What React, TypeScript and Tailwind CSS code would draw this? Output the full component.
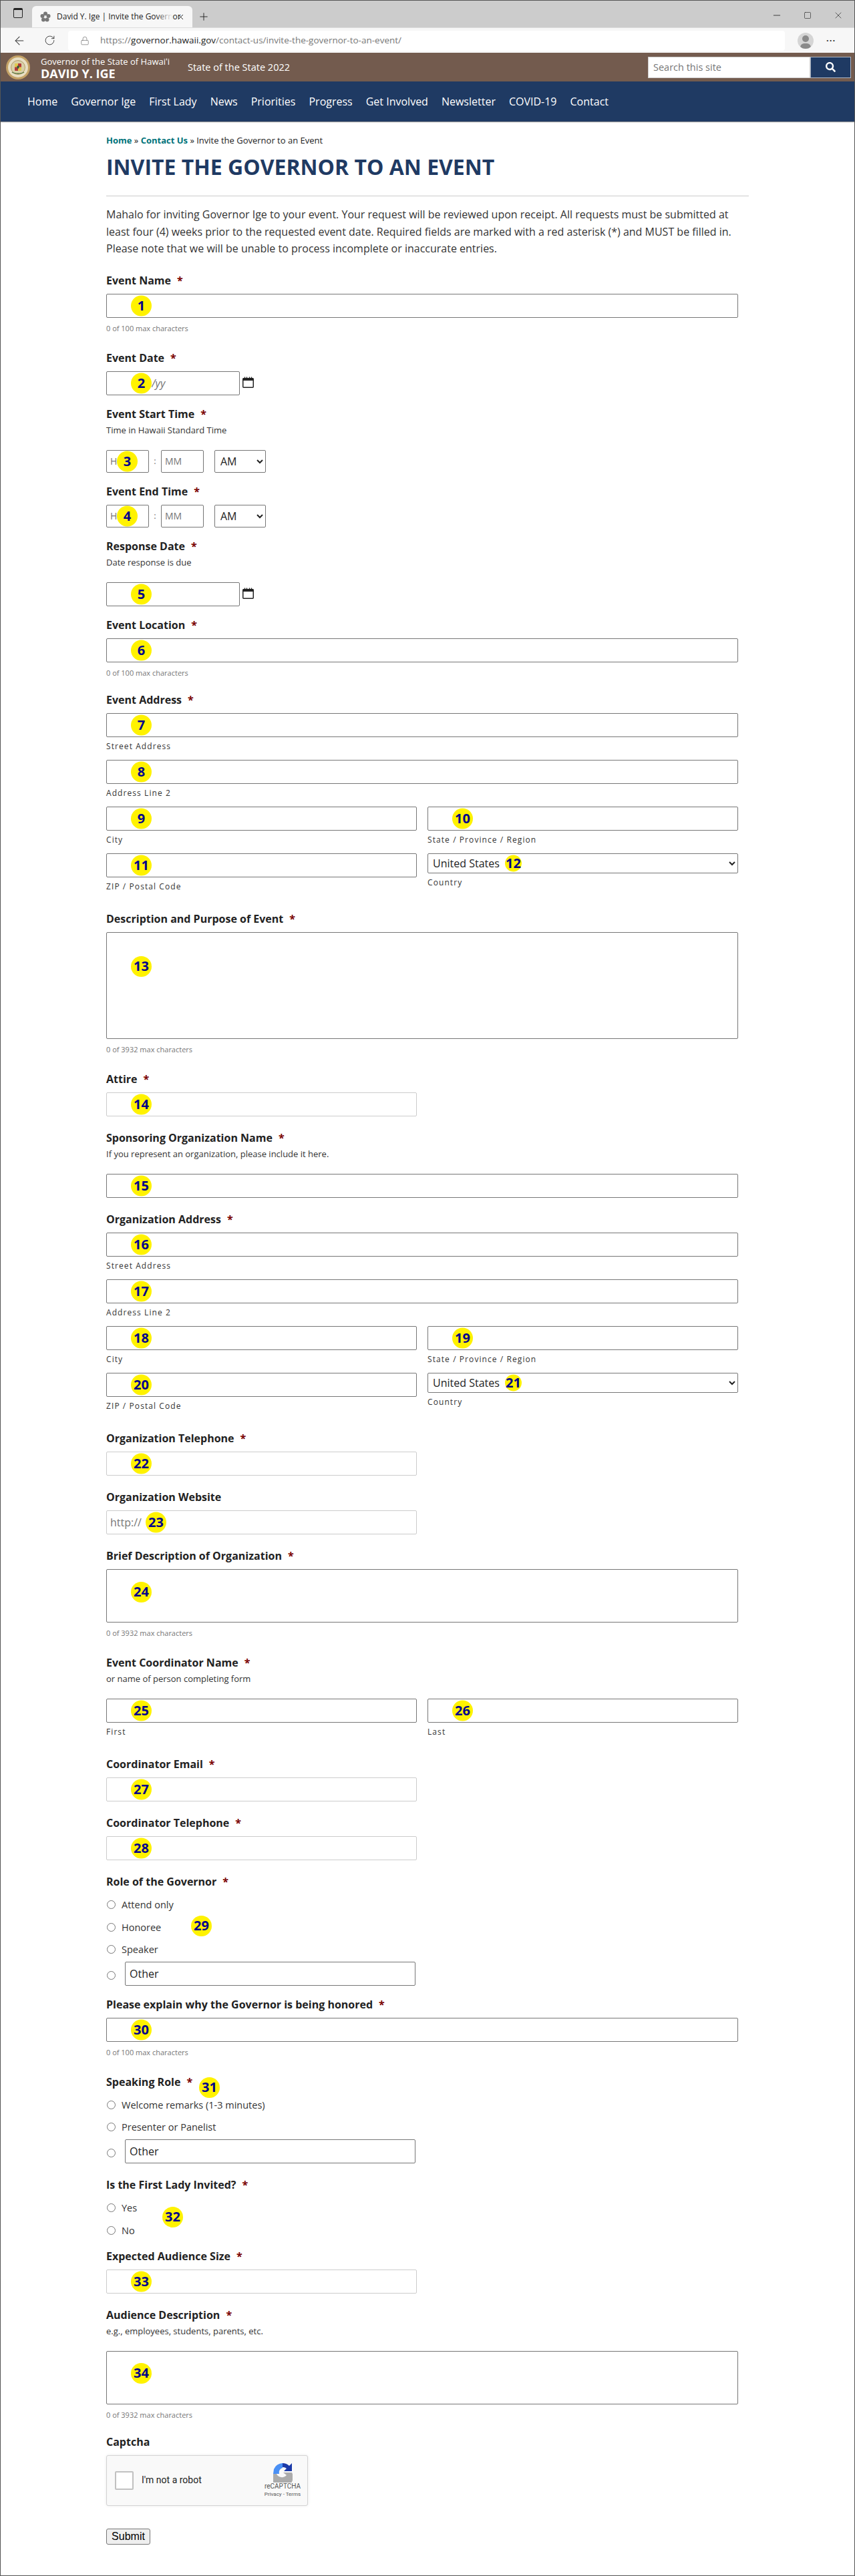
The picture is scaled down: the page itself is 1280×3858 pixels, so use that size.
import type { ReactNode } from "react";

import { ArrowLeft, Lock, Minus, Plus, RotateCw, Square, X } from "lucide-react";
import { FaSearch } from "react-icons/fa";

const NAV_ITEMS = [
  "Home",
  "Governor Ige",
  "First Lady",
  "News",
  "Priorities",
  "Progress",
  "Get Involved",
  "Newsletter",
  "COVID-19",
  "Contact",
];

const DARK_BORDER = "border-[#767676]";
const LIGHT_BORDER = "border-[#cccccc]";

const Badge = ({
  n,
  className = "left-[37px] top-1/2 -translate-y-1/2 h-[31px] w-[31px]",
}: {
  n: number;
  className?: string;
}) => (
  <span
    className={`absolute z-10 flex items-center justify-center rounded-full bg-[#fff200] text-[20px] leading-none font-bold text-[#00008b] ${className}`}
  >
    {n}
  </span>
);

const Label = ({
  text,
  required = true,
  className = "",
}: {
  text: string;
  required?: boolean;
  className?: string;
}) => (
  <div
    className={`h-5 text-[16px] leading-5 font-bold whitespace-nowrap text-[#222222] ${className}`}
  >
    {text}
    {required && <span className="ml-[9px] text-[#790000]">*</span>}
  </div>
);

const Helper = ({ text, className = "" }: { text: string; className?: string }) => (
  <div className={`h-4 text-[13px] leading-4 text-[#333333] ${className}`}>
    {text}
  </div>
);

const Counter = ({ text }: { text: string }) => (
  <div className="mt-2 h-4 text-[11px] leading-4 text-[#767676]">{text}</div>
);

const SubLabel = ({ text }: { text: string }) => (
  <div className="mt-[6px] h-4 text-[12px] leading-4 tracking-[0.09em] text-[#333333]">
    {text}
  </div>
);

const TextBox = ({
  n,
  light = false,
  placeholder,
  badgeClass,
  className = "w-full",
}: {
  n?: number;
  light?: boolean;
  placeholder?: string;
  badgeClass?: string;
  className?: string;
}) => (
  <div className={`relative ${className}`}>
    <input
      type="text"
      placeholder={placeholder}
      className={`block h-9 w-full rounded-[2px] border bg-white pl-[5px] text-[16px] placeholder:text-[#767676] ${
        light ? LIGHT_BORDER : DARK_BORDER
      }`}
    />
    {n !== undefined && <Badge n={n} className={badgeClass} />}
  </div>
);

const TextArea = ({
  n,
  className,
  badgeClass,
}: {
  n: number;
  className: string;
  badgeClass: string;
}) => (
  <div className="relative">
    <textarea
      className={`block w-full resize-none rounded-[2px] border border-[#767676] bg-white ${className}`}
    />
    <Badge n={n} className={badgeClass} />
  </div>
);

const CalendarIcon = () => (
  <svg width="17" height="17" viewBox="0 0 17 17" className="mt-2 ml-1" aria-hidden="true">
    <rect x="0.75" y="2.75" width="15.5" height="13.5" rx="1" fill="#ffffff" stroke="#222222" strokeWidth="1.5" />
    <rect x="0.75" y="2.5" width="15.5" height="3.5" fill="#222222" />
    <path d="M3.5 0.5v3M6.5 0.5v3M10.5 0.5v3M13.5 0.5v3" stroke="#222222" strokeWidth="1.3" />
  </svg>
);

const DateField = ({ n, placeholder }: { n: number; placeholder?: string }) => (
  <div className="flex items-start">
    <div className="relative w-[200px]">
      <input
        type="text"
        placeholder={placeholder}
        className="block h-9 w-full rounded-[2px] border border-[#767676] bg-white pl-[67px] text-[16px] italic placeholder:text-[#767676]"
      />
      <Badge n={n} />
    </div>
    <CalendarIcon />
  </div>
);

const TimeField = ({ n }: { n: number }) => (
  <div className="flex items-center">
    <div className="relative w-16">
      <input
        type="text"
        placeholder="HH"
        className="block h-[34px] w-full rounded-[2px] border border-[#767676] bg-white pl-[5px] text-[14px] placeholder:text-[#767676]"
      />
      <Badge
        n={n}
        className="left-[16px] top-1/2 h-[31px] w-[31px] -translate-y-1/2"
      />
    </div>
    <span className="w-[18px] text-center text-[13px] text-[#767676]">:</span>
    <input
      type="text"
      placeholder="MM"
      className="block h-[34px] w-16 rounded-[2px] border border-[#767676] bg-white pl-[5px] text-[14px] placeholder:text-[#767676]"
    />
    <select className="ml-4 h-[34px] w-[77px] rounded-[2px] border border-[#767676] bg-white pl-1 text-[16px] text-[#222222]">
      <option>AM</option>
      <option>PM</option>
    </select>
  </div>
);

const Radio = ({ text, className = "" }: { text: string; className?: string }) => (
  <label className={`flex h-5 items-center pl-px text-[14.5px] text-[#333333] ${className}`}>
    <input type="radio" className="h-[13px] w-[13px]" name={text} />
    <span className="ml-[9px]">{text}</span>
  </label>
);

const OtherRadio = ({ className = "" }: { className?: string }) => (
  <div className={`flex items-center pl-px ${className}`}>
    <input type="radio" className="mt-[6px] h-[13px] w-[13px]" />
    <input
      type="text"
      defaultValue="Other"
      className="ml-[14px] h-9 w-[435px] rounded-[2px] border border-[#767676] bg-white pl-[6px] text-[16px] text-[#222222]"
    />
  </div>
);

const AddressBlock = ({
  numbers,
  small,
}: {
  numbers: [number, number, number, number, number];
  small: number;
}) => (
  <>
    <TextBox n={numbers[0]} />
    <SubLabel text="Street Address" />
    <div className="mt-3">
      <TextBox n={numbers[1]} />
    </div>
    <SubLabel text="Address Line 2" />
    <div className="mt-3 grid grid-cols-2 gap-x-4 gap-y-3">
      <div>
        <TextBox n={numbers[2]} />
        <SubLabel text="City" />
      </div>
      <div>
        <TextBox n={numbers[3]} />
        <SubLabel text="State / Province / Region" />
      </div>
      <div>
        <TextBox n={numbers[4]} />
        <SubLabel text="ZIP / Postal Code" />
      </div>
      <div>
        <div className="relative">
          <select className="block h-[30px] w-full rounded-[2px] border border-[#767676] bg-white pl-[3px] text-[16px] text-[#222222]">
            <option>United States</option>
          </select>
          <Badge
            n={small}
            className="left-[116px] top-1/2 h-[25px] w-[25px] -translate-y-1/2"
          />
        </div>
        <SubLabel text="Country" />
      </div>
    </div>
  </>
);

const BrowserChrome = () => (
  <>
    <div className="flex h-[40px] items-end bg-[#cccccc] pl-[47px] text-[#222222]">
      <div className="flex h-[32px] w-[240px] items-center rounded-t-[6px] bg-[#f7f7f7] pl-[12px]">
        <svg width="16" height="16" viewBox="0 0 16 16" aria-hidden="true">
          <g fill="#777777">
            <circle cx="8" cy="3.5" r="3" />
            <circle cx="12.5" cy="7" r="3" />
            <circle cx="10.5" cy="12.5" r="3" />
            <circle cx="5" cy="12.5" r="3" />
            <circle cx="3.5" cy="7" r="3" />
          </g>
          <circle cx="8" cy="8" r="1.5" fill="#eeeeee" />
        </svg>
        <div className="relative ml-[9px] w-[173px] text-[12px] whitespace-nowrap">
          David Y. Ige | Invite the Governor
          <span className="absolute top-0 right-0 h-full w-6 bg-gradient-to-r from-transparent to-[#f7f7f7]" />
        </div>
        <X size={13} strokeWidth={1.75} className="ml-[6px]" />
      </div>
      <Plus size={18} strokeWidth={1.25} className="mb-[7px] ml-[8px]" />
      <div className="mb-[10px] ml-auto flex items-center gap-[30px] pr-[16px]">
        <Minus size={16} strokeWidth={1.25} />
        <Square size={12} strokeWidth={1.25} className="mx-[2px] rounded-[1px]" />
        <X size={16} strokeWidth={1} />
      </div>
    </div>
    <div className="relative flex h-[38px] items-center border-t border-[#dddddd] bg-[#f7f7f7] text-[#333333]">
      <span className="absolute top-[-30px] left-[19px] h-[15px] w-[14px] rounded-[2px] border border-[#222222] border-t-[3px]" />
      <ArrowLeft size={20} strokeWidth={1.25} className="ml-[18px]" />
      <RotateCw size={17} strokeWidth={1.25} className="ml-[27px]" />
      <div className="ml-[19px] flex h-[30px] w-[1073px] items-center rounded-[4px] bg-white pl-[18px] text-[13.5px] text-[#777777]">
        <Lock size={14} strokeWidth={1.25} />
        <span className="ml-[16px]">
          https://<span className="text-[#222222]">governor.hawaii.gov</span>
          /contact-us/invite-the-governor-to-an-event/
        </span>
      </div>
      <span className="relative ml-[19px] h-[24px] w-[24px] overflow-hidden rounded-full bg-[#d5d5d5]">
        <span className="absolute top-[4px] left-[7px] h-[10px] w-[10px] rounded-full bg-[#8a8a8a]" />
        <span className="absolute top-[16px] left-[4px] h-[12px] w-[16px] rounded-full bg-[#8a8a8a]" />
      </span>
      <span className="ml-[19px] text-[13px] leading-none font-bold tracking-[1px]">···</span>
    </div>
  </>
);

const Seal = () => (
  <svg width="36" height="36" viewBox="0 0 36 36" className="shrink-0" aria-hidden="true">
    <circle cx="18" cy="18" r="18" fill="#c4a266" />
    <circle cx="18" cy="18" r="15" fill="#e8dfc4" />
    <circle cx="18" cy="18" r="10.5" fill="#d8d0a8" stroke="#a58a4f" strokeWidth="0.75" />
    <rect x="13" y="12" width="10" height="11" rx="1" fill="#b23a3a" />
    <rect x="13" y="12" width="5" height="5.5" fill="#e2c84f" />
    <rect x="18" y="17.5" width="5" height="5.5" fill="#e2c84f" />
    <rect x="16.5" y="15.5" width="3" height="4" fill="#2f5a3c" />
    <path d="M9 25c4 3 14 3 18 0" fill="none" stroke="#5b7a45" strokeWidth="1.5" />
  </svg>
);

const SiteHeader = () => (
  <>
    <div className="flex h-[43px] items-center bg-[#735b4e] pr-[5px] pl-[8px] text-white">
      <Seal />
      <div className="ml-[16px] w-[220px]">
        <div className="text-[13px] leading-[18px]">Governor of the State of Hawaiʻi</div>
        <div className="text-[18px] leading-[18px] font-bold">DAVID Y. IGE</div>
      </div>
      <span className="text-[14.5px]">State of the State 2022</span>
      <div className="ml-auto flex h-[32px]">
        <div className="flex w-[243px] items-center border border-[#cccccc] bg-white pl-[7px] text-[14.5px] text-[#767676]">
          Search this site
        </div>
        <div className="flex w-[61px] items-center justify-center border border-[#aab4c4] bg-[#1f3a63]">
          <FaSearch size={15} />
        </div>
      </div>
    </div>
    <nav className="flex h-[60px] items-center gap-5 bg-[#1f3a63] pl-[40px] text-[16px] text-white shadow-[0_1px_1px_#999999]">
      {NAV_ITEMS.map((item) => (
        <span key={item}>{item}</span>
      ))}
    </nav>
  </>
);

const Recaptcha = () => (
  <div className="mt-[10px] flex h-[76px] w-[302px] items-center rounded-[3px] border border-[#d3d3d3] bg-[#f9f9f9] pl-[12px] font-['Roboto',sans-serif] shadow-[0_0_4px_rgba(0,0,0,0.08)]">
    <span className="h-[28px] w-[28px] rounded-[2px] border-2 border-[#c1c1c1] bg-white" />
    <span className="ml-[12px] text-[14px] text-[#222222]">I'm not a robot</span>
    <div className="ml-auto flex w-[70px] flex-col items-center pr-[4px] text-[#555555]">
      <svg width="30" height="30" viewBox="0 0 30 30" aria-hidden="true">
        <path d="M15 1a14 14 0 0 0-13 9l-1 7 9 0a7 7 0 0 1 5-9z" fill="#4a90f5" />
        <path d="M15 1a14 14 0 0 1 10 4l4-4v12H17l4-4a8 8 0 0 0-6-2z" fill="#1c3aa9" />
        <path d="M1 17h7l-2 0a9 9 0 0 0 15 2l-5-4h13a14 14 0 0 1-28 14z" fill="#ababab" />
      </svg>
      <span className="text-[10px] leading-[12px]">reCAPTCHA</span>
      <span className="mt-[1px] text-[8px] leading-[10px]">Privacy - Terms</span>
    </div>
  </div>
);

const Group = ({ className, children }: { className: string; children: ReactNode }) => (
  <div className={className}>{children}</div>
);

export default function App() {
  return (
    <div className="box-border h-[3858px] overflow-hidden border border-[#555555] bg-white font-['Open_Sans',sans-serif] text-[#222222]">
      <BrowserChrome />
      <SiteHeader />
      <main className="mx-auto w-[962px]">
        <div className="pt-[20px] text-[13px] leading-4">
          <span className="font-bold text-[#00737a]">Home</span> »{" "}
          <span className="font-bold text-[#00737a]">Contact Us</span> » Invite the Governor to an Event
        </div>
        <h1 className="mt-[12px] text-[32px] leading-[40px] font-bold text-[#1f3a63]">
          INVITE THE GOVERNOR TO AN EVENT
        </h1>
        <div className="mt-[23px] border-t border-[#cccccc]" />
        <p className="mt-[15px] text-[16px] leading-[25.6px] text-[#333333]">
          Mahalo for inviting Governor Ige to your event. Your request will be reviewed upon receipt. All requests must be submitted at
          <br />
          least four (4) weeks prior to the requested event date. Required fields are marked with a red asterisk (*) and MUST be filled in.
          <br />
          Please note that we will be unable to process incomplete or inaccurate entries.
        </p>

        <form className="w-[946px]">
          <Group className="mt-[24px]">
            <Label text="Event Name" className="mb-[10px]" />
            <TextBox n={1} />
            <Counter text="0 of 100 max characters" />
          </Group>
          <Group className="mt-[26px]">
            <Label text="Event Date" className="mb-[10px]" />
            <DateField n={2} placeholder="/yy" />
          </Group>
          <Group className="mt-[18px]">
            <Label text="Event Start Time" className="mb-[6px]" />
            <Helper text="Time in Hawaii Standard Time" className="mb-[22px]" />
            <TimeField n={3} />
          </Group>
          <Group className="mt-[18px]">
            <Label text="Event End Time" className="mb-[10px]" />
            <TimeField n={4} />
          </Group>
          <Group className="mt-[18px]">
            <Label text="Response Date" className="mb-[6px]" />
            <Helper text="Date response is due" className="mb-[22px]" />
            <DateField n={5} />
          </Group>
          <Group className="mt-[18px]">
            <Label text="Event Location" className="mb-[10px]" />
            <TextBox n={6} />
            <Counter text="0 of 100 max characters" />
          </Group>
          <Group className="mt-[22px]">
            <Label text="Event Address" className="mb-[10px]" />
            <AddressBlock numbers={[7, 8, 9, 10, 11]} small={12} />
          </Group>
          <Group className="mt-[30px]">
            <Label text="Description and Purpose of Event" className="mb-[10px]" />
            <TextArea
              n={13}
              className="h-[160px]"
              badgeClass="left-[37px] top-[36px] h-[31px] w-[31px]"
            />
            <Counter text="0 of 3932 max characters" />
          </Group>
          <Group className="mt-[26px]">
            <Label text="Attire" className="mb-[10px]" />
            <TextBox n={14} light className="w-[465px]" />
          </Group>
          <Group className="mt-[22px]">
            <Label text="Sponsoring Organization Name" className="mb-[6px]" />
            <Helper text="If you represent an organization, please include it here." className="mb-[22px]" />
            <TextBox n={15} />
          </Group>
          <Group className="mt-[22px]">
            <Label text="Organization Address" className="mb-[10px]" />
            <AddressBlock numbers={[16, 17, 18, 19, 20]} small={21} />
          </Group>
          <Group className="mt-[30px]">
            <Label text="Organization Telephone" className="mb-[10px]" />
            <TextBox n={22} light className="w-[465px]" />
          </Group>
          <Group className="mt-[22px]">
            <Label text="Organization Website" required={false} className="mb-[10px]" />
            <TextBox
              n={23}
              light
              placeholder="http://"
              className="w-[465px]"
              badgeClass="left-[59px] top-1/2 h-[31px] w-[31px] -translate-y-1/2"
            />
          </Group>
          <Group className="mt-[22px]">
            <Label text="Brief Description of Organization" className="mb-[10px]" />
            <TextArea
              n={24}
              className="h-[80px]"
              badgeClass="left-[37px] top-[19px] h-[31px] w-[31px]"
            />
            <Counter text="0 of 3932 max characters" />
          </Group>
          <Group className="mt-[26px]">
            <Label text="Event Coordinator Name" className="mb-[6px]" />
            <Helper text="or name of person completing form" className="mb-[22px]" />
            <div className="grid grid-cols-2 gap-x-4">
              <div>
                <TextBox n={25} />
                <SubLabel text="First" />
              </div>
              <div>
                <TextBox n={26} />
                <SubLabel text="Last" />
              </div>
            </div>
          </Group>
          <Group className="mt-[30px]">
            <Label text="Coordinator Email" className="mb-[10px]" />
            <TextBox n={27} light className="w-[465px]" />
          </Group>
          <Group className="mt-[22px]">
            <Label text="Coordinator Telephone" className="mb-[10px]" />
            <TextBox n={28} light className="w-[465px]" />
          </Group>
          <Group className="mt-[22px]">
            <Label text="Role of the Governor" />
            <div className="relative">
              <Radio text="Attend only" className="mt-[15px]" />
              <Radio text="Honoree" className="mt-[14px]" />
              <Radio text="Speaker" className="mt-[13px]" />
              <OtherRadio className="mt-[8px]" />
              <Badge n={29} className="top-[26px] left-[127px] h-[31px] w-[31px]" />
            </div>
          </Group>
          <Group className="mt-[18px]">
            <Label text="Please explain why the Governor is being honored" className="mb-[10px]" />
            <TextBox n={30} />
            <Counter text="0 of 100 max characters" />
          </Group>
          <Group className="mt-[26px]">
            <div className="relative">
              <Label text="Speaking Role" />
              <Badge n={31} className="top-[3px] left-[139px] h-[31px] w-[31px]" />
            </div>
            <Radio text="Welcome remarks (1-3 minutes)" className="mt-[15px]" />
            <Radio text="Presenter or Panelist" className="mt-[13px]" />
            <OtherRadio className="mt-[8px]" />
          </Group>
          <Group className="mt-[22px]">
            <Label text="Is the First Lady Invited?" />
            <div className="relative">
              <Radio text="Yes" className="mt-[15px]" />
              <Radio text="No" className="mt-[14px]" />
              <Badge n={32} className="top-[8px] left-[84px] h-[31px] w-[31px]" />
            </div>
          </Group>
          <Group className="mt-[18px]">
            <Label text="Expected Audience Size" className="mb-[10px]" />
            <TextBox n={33} light className="w-[465px]" />
          </Group>
          <Group className="mt-[22px]">
            <Label text="Audience Description" className="mb-[6px]" />
            <Helper text="e.g., employees, students, parents, etc." className="mb-[22px]" />
            <TextArea
              n={34}
              className="h-[80px]"
              badgeClass="left-[37px] top-[18px] h-[31px] w-[31px]"
            />
            <Counter text="0 of 3932 max characters" />
          </Group>
          <Group className="mt-[22px]">
            <Label text="Captcha" required={false} />
            <Recaptcha />
          </Group>
          <button
            type="button"
            className="mt-[34px] block h-[24px] w-[66px] rounded-[3px] border border-[#767676] bg-[#efefef] font-['Liberation_Sans',sans-serif] text-[16px] leading-none text-black"
          >
            Submit
          </button>
        </form>
      </main>
    </div>
  );
}
